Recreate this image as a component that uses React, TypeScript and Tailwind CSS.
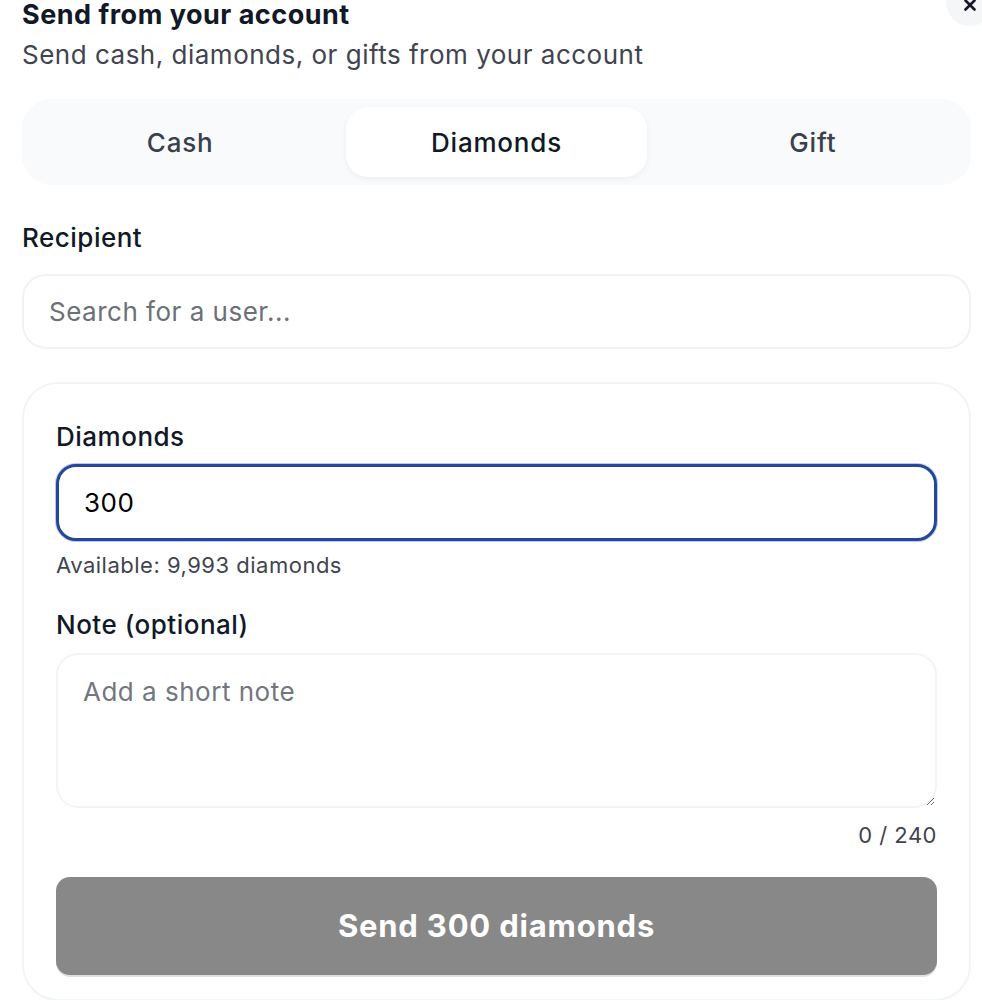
import { useState } from "react";
import { X } from "lucide-react";

const tabs = ["Cash", "Diamonds", "Gift"];

function App() {
  const [active, setActive] = useState("Diamonds");
  const [amount, setAmount] = useState("300");
  const [note, setNote] = useState("");

  return (
    <div
      className="relative h-[1000px] overflow-hidden bg-white pr-[11px] pl-[22px] tracking-[0.5px] text-[#111827]"
      style={{ fontFamily: "Inter, 'Open Sans', sans-serif" }}
    >
      <button
        type="button"
        className="absolute -top-[22px] right-[-12px] flex h-[48px] w-[48px] items-end justify-center rounded-full bg-[#f5f6f7] pb-[12px] text-[#111827]"
        aria-label="Close"
      >
        <X size={18} strokeWidth={3.5} />
      </button>

      <header>
        <h1 className="pt-[1px] text-[27px] leading-[28px] font-bold tracking-[0.5px]">
          Send from your account
        </h1>
        <p className="mt-[8px] text-[26px] leading-[36px] text-[#3f4450]">
          Send cash, diamonds, or gifts from your account
        </p>
      </header>

      <div className="mt-[26px] grid grid-cols-3 gap-[16px] rounded-[30px] bg-[#f8fafb] p-2">
        {tabs.map((tab) => (
          <button
            key={tab}
            type="button"
            onClick={() => setActive(tab)}
            className={
              active === tab
                ? "h-[70px] rounded-[22px] bg-white text-[26px] font-medium tracking-[0.8px] text-[#111827] shadow-[0_2px_6px_rgba(0,0,0,0.05)]"
                : "h-[70px] rounded-[22px] text-[26px] font-medium tracking-[0.8px] text-[#3a3f4b]"
            }
          >
            {tab}
          </button>
        ))}
      </div>

      <label className="mt-[36px] block text-[26px] leading-[34px] font-medium">
        Recipient
      </label>
      <input
        type="text"
        placeholder="Search for a user..."
        className="mt-[19px] block h-[75px] w-full rounded-[24px] border-2 border-[#f1f2f3] bg-white px-[25px] text-[26px] outline-none placeholder:text-[#6b6f78]"
      />

      <section className="mt-[33px] rounded-[36px] border-2 border-[#f3f4f5] px-[32px] pt-[36px] pb-[24px]">
        <label className="block text-[26px] leading-[34px] font-medium">
          Diamonds
        </label>
        <input
          type="text"
          value={amount}
          onChange={(e) => setAmount(e.target.value)}
          className="mt-[10px] block h-[77px] w-full rounded-[20px] border-[3px] border-[#24479a] bg-white px-[25px] text-[26px] text-black shadow-[0_0_0_1px_rgba(59,95,196,0.35)] outline-none"
        />
        <p className="mt-[9px] text-[22px] leading-[30px] text-[#3f4450]">
          Available: 9,993 diamonds
        </p>

        <label className="mt-[28px] block text-[26px] leading-[34px] font-medium">
          Note (optional)
        </label>
        <textarea
          value={note}
          onChange={(e) => setNote(e.target.value)}
          placeholder="Add a short note"
          className="mt-[11px] block h-[155px] w-full rounded-[22px] border-2 border-[#f3f4f5] bg-white px-[25px] py-[17px] text-[26px] outline-none placeholder:text-[#72767e]"
        />
        <p className="mt-[12px] text-right text-[22px] leading-[30px] text-[#3f4450]">
          {note.length} / 240
        </p>

        <button
          type="button"
          className="mt-[27px] h-[98px] w-full rounded-[14px] bg-[#888888] text-[31px] font-bold tracking-[0.8px] text-white shadow-[0_2px_0_rgba(0,0,0,0.12)]"
        >
          Send {amount} diamonds
        </button>
      </section>
    </div>
  );
}

export default App;
